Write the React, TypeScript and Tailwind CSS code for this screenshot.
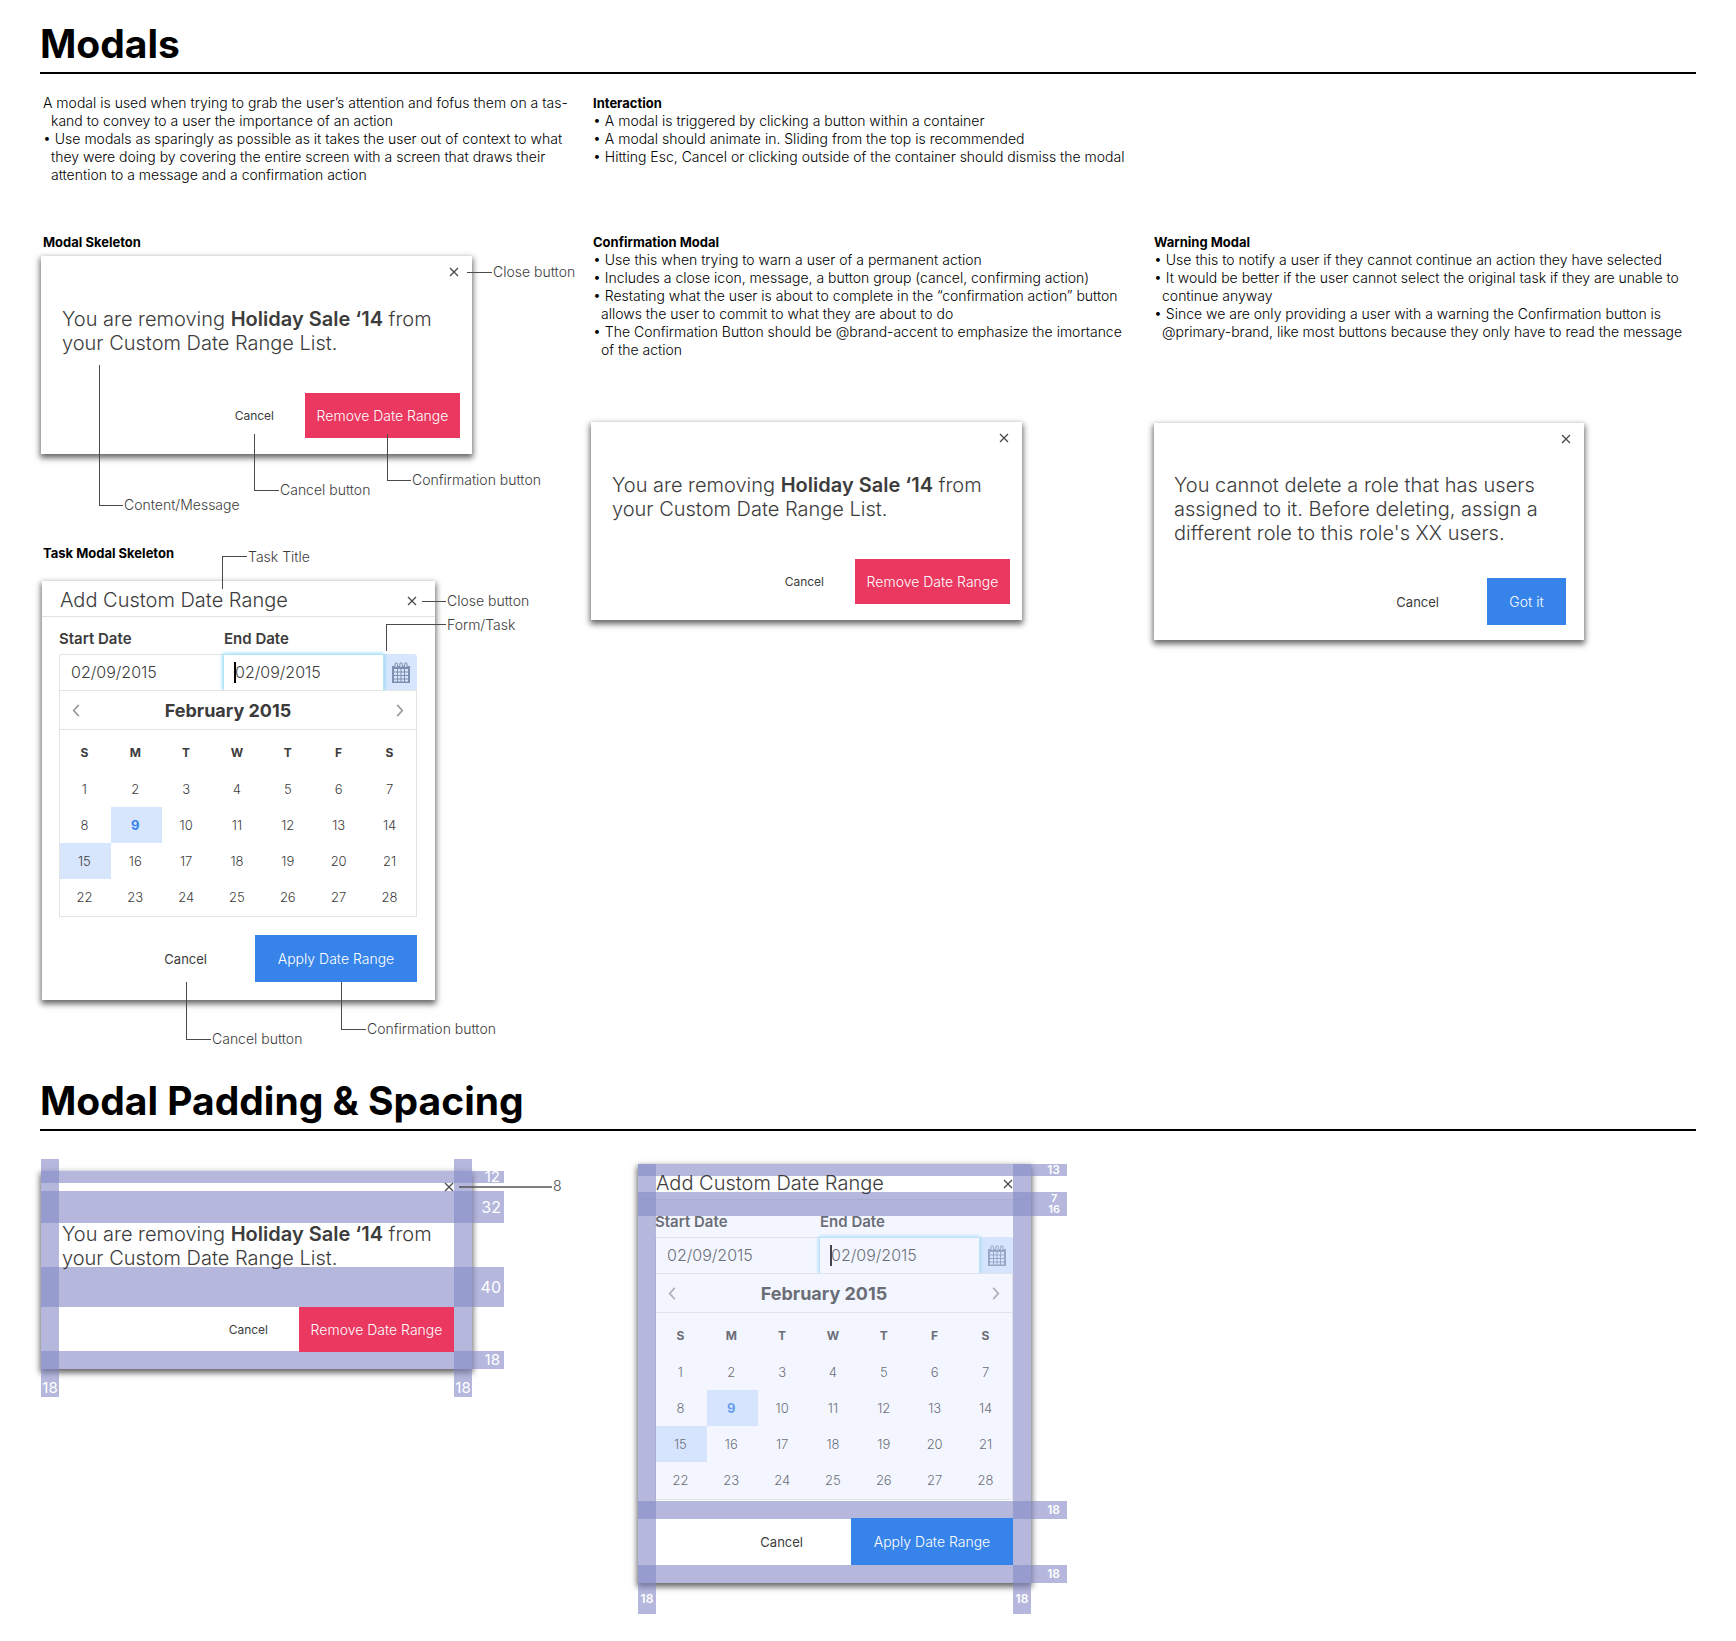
import React from "react";
import { clsx } from "clsx";

const WEEKDAYS = ["S", "M", "T", "W", "T", "F", "S"];
const WEEKS = [
  [1, 2, 3, 4, 5, 6, 7],
  [8, 9, 10, 11, 12, 13, 14],
  [15, 16, 17, 18, 19, 20, 21],
  [22, 23, 24, 25, 26, 27, 28],
];

function SectionTitle({ children, className }: { children: React.ReactNode; className?: string }) {
  return (
    <h1 className={clsx("border-b-2 border-black pb-2 text-[39px] leading-10 font-bold text-black", className)}>
      {children}
    </h1>
  );
}

function Heading({ children, className }: { children: React.ReactNode; className?: string }) {
  return <h2 className={clsx("text-[13px] leading-[18px] font-bold text-black", className)}>{children}</h2>;
}

/* Each item is a list of lines; the first carries the bullet. */
function Bullets({ items }: { items: string[][] }) {
  return (
    <ul className="text-[14px] leading-[18px] font-light text-black">
      {items.map((lines) => (
        <li key={lines[0]} className="whitespace-nowrap">
          {lines.map((line, i) => (
            <span key={line} className={i === 0 ? "block" : "block pl-2"}>
              {i === 0 ? "• " + line : line}
            </span>
          ))}
        </li>
      ))}
    </ul>
  );
}

function CloseButton() {
  return (
    <button type="button" aria-label="Close" className="block size-[10px] text-[#4a4a4a]">
      <svg viewBox="0 0 10 10" className="size-full" fill="none" stroke="currentColor" strokeWidth="1.3">
        <path d="M1 1 9 9M9 1 1 9" />
      </svg>
    </button>
  );
}

const CARD = "relative bg-white font-light text-[#3c3c3c] shadow-[0_3px_6px_1px_rgba(0,0,0,0.6)]";

function RemoveModal({ spaced = false, children }: { spaced?: boolean; children?: React.ReactNode }) {
  return (
    <div className={clsx(CARD, "w-full max-w-[431px]")}>
      <div className={clsx("flex justify-end pt-[11px]", spaced ? "pr-[18px]" : "pr-[13px]")}>
        <CloseButton />
      </div>
      <p className="relative z-10 mt-[30px] pl-[21px] text-[20px] leading-6">
        You are removing <b className="font-semibold">Holiday Sale ‘14</b> from
        <br />
        your Custom Date Range List.
      </p>
      <div
        className={clsx(
          "flex items-center justify-end gap-[31px]",
          spaced ? "mt-[37px] pr-[18px] pb-[17px]" : "mt-[38px] pr-3 pb-4",
        )}
      >
        <button type="button" className="text-[12px] font-normal">
          Cancel
        </button>
        <button type="button" className="relative z-10 h-[45px] w-[155px] bg-[#ea3860] text-[14px] text-white">
          Remove Date Range
        </button>
      </div>
      {children}
    </div>
  );
}

function WarningModal() {
  return (
    <div className={clsx(CARD, "w-full max-w-[430px]")}>
      <div className="flex justify-end pt-[11px] pr-[13px]">
        <CloseButton />
      </div>
      <p className="mt-[29px] pl-5 text-[20px] leading-6">
        You cannot delete a role that has users
        <br />
        assigned to it. Before deleting, assign a
        <br />
        different role to this role's XX users.
      </p>
      <div className="mt-[33px] flex items-center justify-end gap-12 pr-[18px] pb-[15px]">
        <button type="button" className="pt-0.5 text-[13px] font-normal">
          Cancel
        </button>
        <button type="button" className="h-[47px] w-[79px] bg-[#3683ea] text-[14px] text-white">
          Got it
        </button>
      </div>
    </div>
  );
}

function CalendarIcon() {
  return (
    <svg viewBox="0 0 18 21" className="h-[21px] w-[18px]" fill="none" stroke="#7d8fae" aria-hidden="true">
      <path d="M0 4h18v17H0z" fill="#7d8fae" stroke="none" />
      <path
        d="M2 7h3v2.500H2zM6 7h2.500v2.500H6zM9.500 7H12v2.500H9.500zM13 7h3v2.500h-3zM2 10.500h3V13H2zM6 10.500h2.500V13H6zM9.500 10.500H12V13H9.500zM13 10.500h3V13h-3zM2 14h3v2.500H2zM6 14h2.500v2.500H6zM9.500 14H12v2.500H9.500zM13 14h3v2.500h-3zM2 17.500h3v2H2zM6 17.500h2.500v2H6zM9.500 17.500H12v2H9.500zM13 17.500h3v2h-3z"
        fill="#d7e6fc"
        stroke="none"
      />
      <path d="M3 5V2a1.200 1.200 0 0 1 2.400 0v3M7.800 5V2a1.200 1.200 0 0 1 2.400 0v3M12.600 5V2a1.200 1.200 0 0 1 2.400 0v3" fill="#d7e6fc" />
    </svg>
  );
}

function TaskModal({ id, washed = false, children }: { id: string; washed?: boolean; children?: React.ReactNode }) {
  return (
    <div className={clsx(CARD, "w-full max-w-[393px]")}>
      <div className="flex h-9 items-center justify-between border-b border-[#e3e3e3] pt-1 pr-[18px] pl-[18px]">
        <h3 className="relative z-10 pb-px text-[20px] leading-6">Add Custom Date Range</h3>
        <CloseButton />
      </div>
      <div className="relative">
        <div className="pr-[18px] pl-[17px]">
          <div className="flex items-end pt-3">
            <div className="flex-[164_1_0%]">
              <label htmlFor={id + "-start"} className="block h-[25px] text-[15px] leading-5 font-semibold">
                Start Date
              </label>
              <input
                id={id + "-start"}
                defaultValue="02/09/2015"
                className="block h-9 w-full rounded-tl-[3px] border-t border-l border-[#e3e3e3] pr-2 pb-0.5 pl-[11px] text-[16px] outline-none"
              />
            </div>
            <div className="relative z-[1] flex-[161_1_0%]">
              <label htmlFor={id + "-end"} className="block h-[25px] pl-px text-[15px] leading-5 font-semibold">
                End Date
              </label>
              <input
                id={id + "-end"}
                defaultValue="02/09/2015"
                className="block h-9 w-full border border-b-0 border-[#b5e4f5] bg-white pr-2 pb-0.5 pl-[11px] text-[16px] shadow-[0_0_4px_#6fcdf0] outline-none"
              />
              <span className="absolute bottom-[7px] left-[11px] h-[21px] w-0.5 bg-black" />
            </div>
            <button
              type="button"
              aria-label="Open calendar"
              className="flex h-9 w-[33px] items-center justify-center rounded-tr-[3px] bg-[#d7e6fc]"
            >
              <CalendarIcon />
            </button>
          </div>
          <div className="relative z-[2] border border-[#e3e3e3] bg-white">
            <div className="flex h-[39px] items-center justify-between border-b border-[#e3e3e3] px-3">
              <button type="button" aria-label="Previous month">
                <svg viewBox="0 0 8 14" className="h-[13px] w-2" fill="none" stroke="#9b9b9b" strokeWidth="1.8">
                  <path d="M7 1 1.500 7 7 13" />
                </svg>
              </button>
              <span className="pt-0.5 pr-5 text-[18px] leading-6 font-bold">February 2015</span>
              <button type="button" aria-label="Next month">
                <svg viewBox="0 0 8 14" className="h-[13px] w-2" fill="none" stroke="#9b9b9b" strokeWidth="1.8">
                  <path d="m1 1 5.500 6L1 13" />
                </svg>
              </button>
            </div>
            <table className="mt-[5px] mb-px w-full table-fixed text-center text-[13px]">
              <thead>
                <tr>
                  {WEEKDAYS.map((d, i) => (
                    <th key={i} className="h-9 pr-0.5 text-[12px] font-bold">
                      {d}
                    </th>
                  ))}
                </tr>
              </thead>
              <tbody>
                {WEEKS.map((week) => (
                  <tr key={week[0]}>
                    {week.map((day) => (
                      <td
                        key={day}
                        className={clsx(
                          "h-9 pt-0.5 pr-0.5",
                          (day === 9 || day === 15) && "bg-[#d7e6fc]",
                          day === 9 && "font-bold text-[#3683ea]",
                        )}
                      >
                        {day}
                      </td>
                    ))}
                  </tr>
                ))}
              </tbody>
            </table>
          </div>
        </div>
        {washed && <div className="absolute inset-x-[18px] top-0 bottom-0 z-[3] bg-[#d8e2ff]/30" />}
      </div>
      <div className="flex items-center justify-end gap-12 px-[18px] py-[18px]">
        <button type="button" className="pt-0.5 text-[13px] font-normal">
          Cancel
        </button>
        <button type="button" className="relative z-10 h-[47px] w-[162px] bg-[#3683ea] text-[14px] text-white">
          Apply Date Range
        </button>
      </div>
      {children}
    </div>
  );
}

/* A leader line with its label at the right end; `box` places and sizes the line. */
function Callout({ box, label, top = false }: { box: string; label: string; top?: boolean }) {
  return (
    <div className={clsx("absolute z-20 border-[#4a4a4a]", top ? "border-t" : "border-b", box)}>
      <span
        className={clsx(
          "absolute left-full pl-px text-[14px] leading-[18px] whitespace-nowrap text-[#3c3c3c]",
          top ? "top-0 -translate-y-1/2" : "bottom-0 translate-y-1/2",
        )}
      >
        {label}
      </span>
    </div>
  );
}

/* A measured strip laid over a modal, with its size in pixels as the label. */
function Band({ box, label }: { box: string; label?: React.ReactNode }) {
  return <div className={clsx("absolute z-[5] flex bg-[#8388c4]/60 text-white", box)}>{label}</div>;
}

export default function App() {
  return (
    <main className="min-h-screen bg-white px-10 pt-6 pb-14 font-['Inter',sans-serif]">
      <SectionTitle>Modals</SectionTitle>

      <div className="mt-5 grid grid-cols-[551fr_563fr_542fr]">
        <div className="pl-[3px] text-[14px] leading-[18px] font-light whitespace-nowrap text-black">
          <p>
            A modal is used when trying to grab the user’s attention and fofus them on a tas-
            <span className="block pl-2">kand to convey to a user the importance of an action</span>
          </p>
          <Bullets
            items={[
              [
                "Use modals as sparingly as possible as it takes the user out of context to what",
                "they were doing by covering the entire screen with a screen that draws their",
                "attention to a message and a confirmation action",
              ],
            ]}
          />
        </div>
        <div className="pl-0.5">
          <Heading>Interaction</Heading>
          <Bullets
            items={[
              ["A modal is triggered by clicking a button within a container"],
              ["A modal should animate in. Sliding from the top is recommended"],
              ["Hitting Esc, Cancel or clicking outside of the container should dismiss the modal"],
            ]}
          />
        </div>
      </div>

      <div className="mt-[49px] grid grid-cols-[551fr_563fr_542fr]">
        <section className="pl-px">
          <Heading className="mb-[5px] pl-0.5">Modal Skeleton</Heading>
          <RemoveModal>
            <Callout box="-right-5 top-4 w-[25px]" label="Close button" />
            <Callout box="left-[58px] top-[109px] h-[141px] w-6 border-l" label="Content/Message" />
            <Callout box="right-[193px] -bottom-[37px] h-[57px] w-[25px] border-l" label="Cancel button" />
            <Callout box="right-[61px] -bottom-[27px] h-[47px] w-6 border-l" label="Confirmation button" />
          </RemoveModal>

          <Heading className="mt-[90px] mb-[19px] pl-0.5">Task Modal Skeleton</Heading>
          <div className="pl-px">
            <TaskModal id="skeleton">
              <Callout top box="left-[180px] -top-[25px] h-[33px] w-[25px] border-l" label="Task Title" />
              <Callout box="-right-[11px] top-5 w-6" label="Close button" />
              <Callout top box="-right-[11px] top-[43px] h-[27px] w-[60px] border-l" label="Form/Task" />
              <Callout box="right-[224px] -bottom-10 h-[58px] w-[25px] border-l" label="Cancel button" />
              <Callout box="right-[69px] -bottom-[30px] h-12 w-[25px] border-l" label="Confirmation button" />
            </TaskModal>
          </div>
        </section>

        <section>
          <div className="min-h-[189px] pl-0.5">
            <Heading>Confirmation Modal</Heading>
            <Bullets
              items={[
                ["Use this when trying to warn a user of a permanent action"],
                ["Includes a close icon, message, a button group (cancel, confirming action)"],
                [
                  "Restating what the user is about to complete in the “confirmation action” button",
                  "allows the user to commit to what they are about to do",
                ],
                [
                  "The Confirmation Button should be @brand-accent to emphasize the imortance",
                  "of the action",
                ],
              ]}
            />
          </div>
          <RemoveModal />
        </section>

        <section>
          <div className="min-h-[190px]">
            <Heading>Warning Modal</Heading>
            <Bullets
              items={[
                ["Use this to notify a user if they cannot continue an action they have selected"],
                [
                  "It would be better if the user cannot select the original task if they are unable to",
                  "continue anyway",
                ],
                [
                  "Since we are only providing a user with a warning the Confirmation button is",
                  "@primary-brand, like most buttons because they only have to read the message",
                ],
              ]}
            />
          </div>
          <WarningModal />
        </section>
      </div>

      <SectionTitle className="mt-[81px]">Modal Padding &amp; Spacing</SectionTitle>

      <div className="mt-[33px] grid grid-cols-[598fr_1058fr]">
        <div className="pt-[7px] pl-px">
          <RemoveModal spaced>
            <Band box="left-0 -top-3 -bottom-7 w-[18px] items-end justify-center text-[15px] leading-[18px] font-normal" label="18" />
            <Band box="right-0 -top-3 -bottom-7 w-[18px] items-end justify-center text-[15px] leading-[18px] font-normal" label="18" />
            <Band box="left-0 -right-8 top-0 h-3 items-center justify-end pr-1 text-[15px] font-normal" label="12" />
            <Band box="left-0 -right-8 top-5 h-8 items-center justify-end pr-[3px] text-[16px] font-normal" label="32" />
            <Band box="left-0 -right-8 top-24 h-10 items-center justify-end pr-[3px] text-[16px] font-normal" label="40" />
            <Band box="left-0 -right-8 bottom-0 h-[18px] items-center justify-end pr-1 text-[15px] font-normal" label="18" />
            <Callout box="-right-20 top-[15px] w-[93px] border-b-2 border-[#4a4a4a]/70" label="8" />
          </RemoveModal>
        </div>
        <div>
          <TaskModal id="spacing" washed>
            <Band box="left-0 top-0 -bottom-[31px] w-[18px] items-end justify-center pb-[7px] text-[12px] leading-4 font-semibold" label="18" />
            <Band box="right-0 top-0 -bottom-[31px] w-[18px] items-end justify-center pb-[7px] text-[12px] leading-4 font-semibold" label="18" />
            <Band box="left-0 -right-9 top-0 h-3 items-center justify-end pr-[7px] text-[12px] font-semibold" label="13" />
            <Band
              box="left-0 -right-9 top-7 h-6 items-center justify-end pr-[7px] text-center text-[11px] leading-[11px] font-semibold"
              label={
                <span>
                  7<br />
                  16
                </span>
              }
            />
            <Band box="left-0 -right-9 bottom-16 h-[18px] items-center justify-end pr-[7px] text-[12px] font-semibold" label="18" />
            <Band box="left-0 -right-9 bottom-0 h-[18px] items-center justify-end pr-[7px] text-[12px] font-semibold" label="18" />
          </TaskModal>
        </div>
      </div>
    </main>
  );
}
